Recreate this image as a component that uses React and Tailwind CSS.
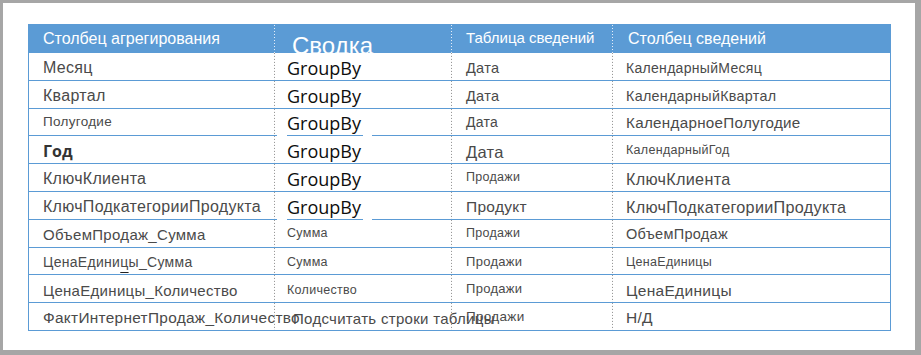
const SANS = "font-['Liberation_Sans',Arial,sans-serif]";
const SEGOE = "font-['Open_Sans','Noto_Sans',sans-serif]";
const INK = 'text-[#4a4a4a] tracking-[0.3px]';

// dotted divider drawn on the left edge of columns 2..4
const DOT_BODY =
  'bg-[linear-gradient(to_bottom,#8c8c8c_1px,transparent_1px)] bg-[length:1px_3px] bg-repeat-y bg-left';
const DOT_HEAD =
  'bg-[linear-gradient(to_bottom,#e6eef8_1px,transparent_1px)] bg-[length:1px_3px] bg-repeat-y bg-left';

const COLS = 'grid grid-cols-[245px_177px_161px_278px]';
const PAD = ['pl-[14px]', 'pl-[13px]', 'pl-[15px]', 'pl-[14px]'];

const groupBy = { t: 'GroupBy', f: SEGOE, k: 'text-[#0d0d0d] font-medium', c: 'text-[18px] pt-[3px]' };

const rows = [
  [
    { t: 'Месяц', c: 'text-[16px] pt-[4px]' },
    groupBy,
    { t: 'Дата', c: 'text-[14.5px] pt-[4px]' },
    { t: 'КалендарныйМесяц', c: 'text-[14px] pt-[4px]' },
  ],
  [
    { t: 'Квартал', c: 'text-[16px] pt-[4px]' },
    groupBy,
    { t: 'Дата', c: 'text-[14.5px] pt-[4px]' },
    { t: 'КалендарныйКвартал', c: 'text-[14.3px] pt-[4px]' },
  ],
  [
    { t: 'Полугодие', c: 'text-[13.5px]' },
    { ...groupBy, gaps: true },
    { t: 'Дата', c: 'text-[14px] pt-[1px]' },
    { t: 'КалендарноеПолугодие', c: 'text-[15.2px] pt-[2px]' },
  ],
  [
    { t: 'Год', f: SEGOE, k: 'text-[#333] font-bold', c: 'text-[16px] pt-[3px]' },
    groupBy,
    { t: 'Дата', c: 'text-[16.5px] pt-[4px]' },
    { t: 'КалендарныйГод', c: 'text-[12.5px] pt-[1px]' },
  ],
  [
    { t: 'КлючКлиента', c: 'text-[16px] pt-[3px]' },
    groupBy,
    { t: 'Продажи', c: 'text-[12.5px]' },
    { t: 'КлючКлиента', c: 'text-[16.2px] pt-[4px]' },
  ],
  [
    { t: 'КлючПодкатегорииПродукта', c: 'text-[16px] pt-[3px]' },
    { ...groupBy, gaps: true },
    { t: 'Продукт', c: 'text-[15.5px] pt-[2px]' },
    { t: 'КлючПодкатегорииПродукта', c: 'text-[16.2px] pt-[3px]' },
  ],
  [
    { t: 'ОбъемПродаж_Сумма', c: 'text-[15px] pt-[3px]' },
    { t: 'Сумма', c: 'text-[12.5px]' },
    { t: 'Продажи', c: 'text-[12.5px]' },
    { t: 'ОбъемПродаж', c: 'text-[14.5px] pt-[3px]' },
  ],
  [
    {
      t: (
        <>
          ЦенаЕдини<span className="underline underline-offset-[5px] decoration-[#222]">ц</span>ы_Сумма
        </>
      ),
      c: 'text-[14px] pt-[2px]',
    },
    { t: 'Сумма', c: 'text-[12.5px] pt-[2px]' },
    { t: 'Продажи', c: 'text-[13px] pt-[2px]' },
    { t: 'ЦенаЕдиницы', c: 'text-[12.5px] pt-[2px]' },
  ],
  [
    { t: 'ЦенаЕдиницы_Количество', c: 'text-[15px] pt-[3px]' },
    { t: 'Количество', c: 'text-[12.5px] pt-[3px]' },
    { t: 'Продажи', c: 'text-[13px]' },
    { t: 'ЦенаЕдиницы', c: 'text-[15.5px] pt-[3px]' },
  ],
  [
    { t: 'ФактИнтернетПродаж_Количество', c: 'text-[15.4px] pt-[3px]' },
    { t: 'Подсчитать строки таблицы', c: 'text-[15px] pt-[3px] ml-[6px]' },
    { t: 'Продажи', c: 'text-[13.5px]' },
    { t: 'Н/Д', c: 'text-[15.5px] pt-[3px]' },
  ],
];

function Cell({ col, cell }) {
  return (
    <div
      className={`relative flex items-center whitespace-nowrap ${PAD[col]} ${
        col > 0 ? DOT_BODY : ''
      }`}
    >
      <span className={`${cell.f || SANS} ${cell.k || INK} leading-none ${cell.c}`}>{cell.t}</span>
      {cell.gaps && (
        <>
          <span className="absolute -bottom-px left-[3px] h-px w-[10px] bg-white" />
          <span className="absolute -bottom-px left-[89px] h-px w-[9px] bg-white" />
        </>
      )}
    </div>
  );
}

export default function App() {
  return (
    <div className="w-[921px] h-[355px] bg-[#a6a6a6] pt-[3px] pl-[3px] pr-[6px] pb-[5px]">
      <div className="h-full bg-white pt-[21px] pl-[25px]">
        <div className="w-[863px] border-x border-[#5b9bd5]">
          <div className={`${COLS} h-[29px] bg-[#5b9bd5] text-white ${SANS}`}>
            <div className="flex items-center pl-[14px] text-[16px]">Столбец агрегирования</div>
            <div className={`overflow-hidden pl-[18px] pt-[10px] text-[24px] leading-none ${DOT_HEAD}`}>
              Сводка
            </div>
            <div className={`flex items-center pl-[15px] text-[15px] ${DOT_HEAD}`}>Таблица сведений</div>
            <div className={`flex items-center pl-[16px] text-[16px] ${DOT_HEAD}`}>Столбец сведений</div>
          </div>
          {rows.map((r, i) => (
            <div key={i} className={`${COLS} h-[27.8px] border-b border-[#5b9bd5]`}>
              {r.map((cell, j) => (
                <Cell key={j} col={j} cell={cell} />
              ))}
            </div>
          ))}
        </div>
      </div>
    </div>
  );
}
